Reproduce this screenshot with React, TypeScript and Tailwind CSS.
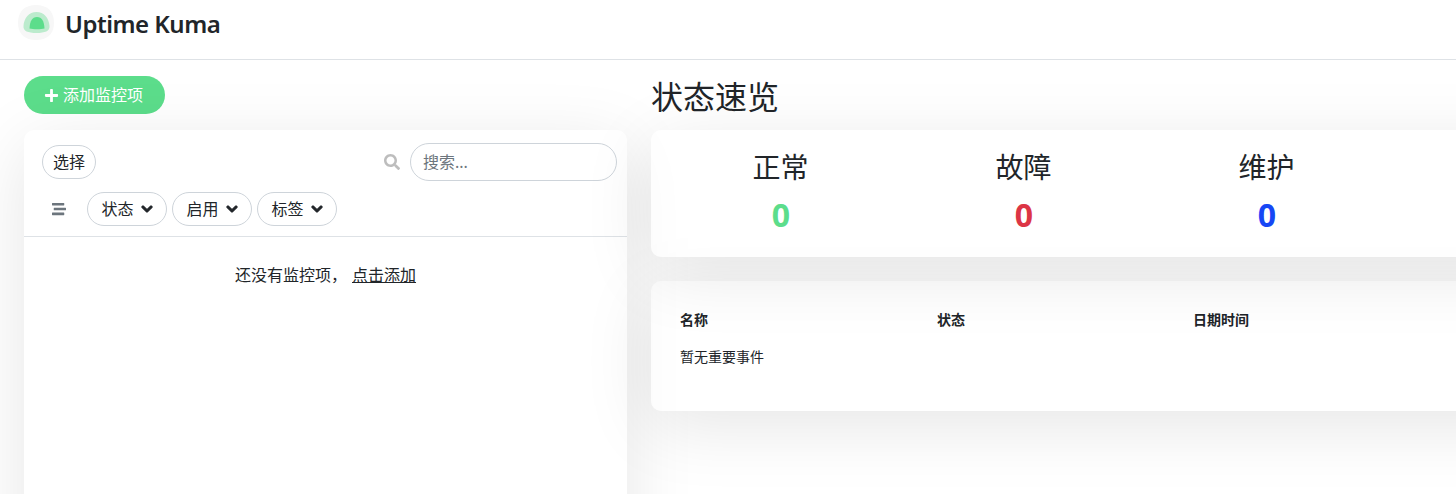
import { FaChevronDown, FaPlus, FaSearch, FaStream } from "react-icons/fa";

const font = "font-['Segoe_UI','Noto_Sans','Noto_Sans_CJK_SC',sans-serif]";

const Logo = () => (
  <svg width="40" height="38" viewBox="0 0 40 38" className="mr-[8px]">
    <path d="M19 0C30 0 37 6 37 18C37 29 30 35 19 35C8 35 1 29 1 18C1 6 8 0 19 0Z" fill="#f7f7f7" />
    <path d="M19.500 7C27 7 32 13 32.500 21C33 26 28 28 19.500 28C11 28 6 26 6.500 21C7 13 12 7 19.500 7Z" fill="#bcebcd" />
    <path d="M20 12C25 12 27 16 27.500 23.500C24 24.500 16 24.500 12.500 23.500C13 16 15 12 20 12Z" fill="#5cdd8b" />
  </svg>
);

const FilterButton = ({ label }: { label: string }) => (
  <button className="flex h-[34px] w-[80px] items-center justify-center gap-[7px] rounded-full border border-[#ced4da] bg-white text-[16px] text-[#212529]">
    {label}
    <FaChevronDown size={12} stroke="currentColor" strokeWidth={50} />
  </button>
);

const Stat = ({ label, color }: { label: string; color: string }) => (
  <div className="w-[243px] text-center">
    <h3 className="text-[28px] leading-[34px] text-[#212529]">{label}</h3>
    <div className={`mt-[12px] ml-[1px] text-[32px] leading-[38px] font-bold ${color}`}>0</div>
  </div>
);

export default function App() {
  return (
    <div className={`h-[494px] w-[1456px] overflow-hidden bg-white ${font}`}>
      <header className="flex h-[60px] items-start border-b border-[#dee2e6] pt-[5px] pl-[17px]">
        <Logo />
        <span className="mt-[2px] text-[24px] leading-[34px] font-semibold tracking-[-0.5px] text-[#212529]">Uptime Kuma</span>
      </header>

      <main className="flex w-[1800px] gap-6 pl-6">
        <div className="w-[603px] shrink-0 pt-4">
          <button className="flex h-[38px] w-[141px] items-center justify-center gap-[4px] rounded-full bg-[#5cdd8b] pr-[2px] text-[16px] text-white">
            <FaPlus size={15} />
            添加监控项
          </button>

          <section className="mt-4 h-[600px] rounded-[10px] bg-white/50 shadow-[0_15px_70px_rgba(0,0,0,0.1)]">
            <div className="h-[107px] border-b border-[#dee2e6] pt-[13px]">
              <div className="flex items-center justify-between pr-[10px] pl-[18px]">
                <button className="h-[34px] w-[54px] rounded-full border border-[#ced4da] text-[16px] text-[#212529]">选择</button>
                <div className="flex items-center gap-[10px]">
                  <FaSearch size={16} className="text-[#bdbdbd]" />
                  <div className="flex h-[38px] w-[207px] items-center rounded-full border border-[#ced4da] px-3 text-[16px] text-[#6c757d]">搜索...</div>
                </div>
              </div>
              <div className="mt-[11px] flex items-center gap-[5px] pl-[28px]">
                <FaStream size={14} className="mr-[16px] text-[#6c757d]" />
                <FilterButton label="状态" />
                <FilterButton label="启用" />
                <FilterButton label="标签" />
              </div>
            </div>
            <div className="pt-[28px] pl-[211px] text-[16px] leading-[20px] text-[#212529]">
              还没有监控项，
              <span className="ml-[5px] underline">点击添加</span>
            </div>
          </section>
        </div>

        <div className="w-[1000px] shrink-0">
          <h1 className="mt-[15px] text-[32px] leading-[44px] text-[#212529]">状态速览</h1>
          <section className="relative mt-[11px] flex h-[127px] rounded-[10px] bg-white/50 pt-[20px] pl-[8px] shadow-[0_15px_70px_rgba(0,0,0,0.1)]">
            <Stat label="正常" color="text-[#5cdd8b]" />
            <Stat label="故障" color="text-[#dc3545]" />
            <Stat label="维护" color="text-[#1747f5]" />
          </section>
          <section className="mt-6 h-[130px] rounded-[10px] bg-white/50 pt-[29px] pl-[29px] text-[14px] leading-[20px] text-[#212529] shadow-[0_15px_70px_rgba(0,0,0,0.1)]">
            <div className="flex font-bold">
              <div className="w-[257px]">名称</div>
              <div className="w-[256px]">状态</div>
              <div>日期时间</div>
            </div>
            <div className="mt-[17px]">暂无重要事件</div>
          </section>
        </div>
      </main>
    </div>
  );
}
